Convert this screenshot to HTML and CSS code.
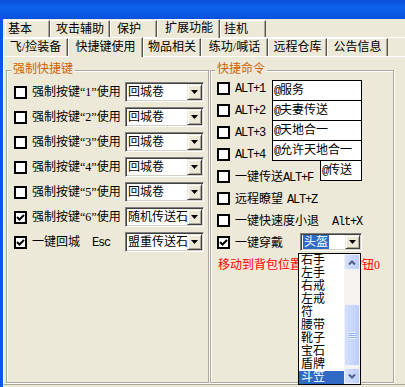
FILE: index.html
```html
<!DOCTYPE html>
<html lang="zh-CN">
<head>
<meta charset="utf-8">
<title>扩展功能 - 快捷键使用</title>
<link rel="stylesheet" href="styles.css">
</head>
<body>
<div class="titlebar"></div>
<div class="frame">
  <div class="tabs outer">
    <div class="tab">基本</div>
    <div class="tab">攻击辅助</div>
    <div class="tab">保护</div>
    <div class="tab active">扩展功能</div>
    <div class="tab">挂机</div>
  </div>
  <div class="tabs inner">
    <div class="tab">飞/捡装备</div>
    <div class="tab active">快捷键使用</div>
    <div class="tab">物品相关</div>
    <div class="tab">练功/喊话</div>
    <div class="tab">远程仓库</div>
    <div class="tab">公告信息</div>
  </div>
  <div class="panel">
    <fieldset class="group gleft">
      <legend>强制快捷键</legend>
      <div class="lrows">
        <div class="lrow"><span class="cb"></span><span class="lbl">强制按键“1”使用</span><div class="sel"><span class="val">回城卷</span><span class="dd"><svg width="7" height="4" viewBox="0 0 7 4"><path d="M0 0H7L3.5 4Z"/></svg></span></div></div>
        <div class="lrow"><span class="cb"></span><span class="lbl">强制按键“2”使用</span><div class="sel"><span class="val">回城卷</span><span class="dd"><svg width="7" height="4" viewBox="0 0 7 4"><path d="M0 0H7L3.5 4Z"/></svg></span></div></div>
        <div class="lrow"><span class="cb"></span><span class="lbl">强制按键“3”使用</span><div class="sel"><span class="val">回城卷</span><span class="dd"><svg width="7" height="4" viewBox="0 0 7 4"><path d="M0 0H7L3.5 4Z"/></svg></span></div></div>
        <div class="lrow"><span class="cb"></span><span class="lbl">强制按键“4”使用</span><div class="sel"><span class="val">回城卷</span><span class="dd"><svg width="7" height="4" viewBox="0 0 7 4"><path d="M0 0H7L3.5 4Z"/></svg></span></div></div>
        <div class="lrow"><span class="cb"></span><span class="lbl">强制按键“5”使用</span><div class="sel"><span class="val">回城卷</span><span class="dd"><svg width="7" height="4" viewBox="0 0 7 4"><path d="M0 0H7L3.5 4Z"/></svg></span></div></div>
        <div class="lrow"><span class="cb"><svg width="9" height="9" viewBox="0 0 9 9"><path d="M1 4L3.5 6.5L8 2" fill="none" stroke="#000" stroke-width="2"/></svg></span><span class="lbl">强制按键“6”使用</span><div class="sel"><span class="val">随机传送石</span><span class="dd"><svg width="7" height="4" viewBox="0 0 7 4"><path d="M0 0H7L3.5 4Z"/></svg></span></div></div>
        <div class="lrow"><span class="cb"><svg width="9" height="9" viewBox="0 0 9 9"><path d="M1 4L3.5 6.5L8 2" fill="none" stroke="#000" stroke-width="2"/></svg></span><span class="lbl">一键回城<span class="en esc">Esc</span></span><div class="sel"><span class="val">盟重传送石</span><span class="dd"><svg width="7" height="4" viewBox="0 0 7 4"><path d="M0 0H7L3.5 4Z"/></svg></span></div></div>
      </div>
    </fieldset>
    <fieldset class="group gright">
      <legend>快捷命令</legend>
      <div class="rpanel">
        <div class="rrows">
          <div class="rrow"><span class="cb"></span><span class="rl"><span class="en">ALT+1</span></span></div>
          <div class="rrow"><span class="cb"></span><span class="rl"><span class="en">ALT+2</span></span></div>
          <div class="rrow"><span class="cb"></span><span class="rl"><span class="en">ALT+3</span></span></div>
          <div class="rrow"><span class="cb"></span><span class="rl"><span class="en">ALT+4</span></span></div>
          <div class="rrow"><span class="cb"></span><span class="rl">一键传送<span class="en">ALT+F</span></span></div>
          <div class="rrow"><span class="cb"></span><span class="rl">远程瞭望<span class="en gap4">ALT+Z</span></span></div>
          <div class="rrow"><span class="cb"></span><span class="rl">一键快速度小退<span class="en gap13">Alt+X</span></span></div>
          <div class="rrow"><span class="cb"><svg width="9" height="9" viewBox="0 0 9 9"><path d="M1 4L3.5 6.5L8 2" fill="none" stroke="#000" stroke-width="2"/></svg></span><span class="rl wear-lbl">一键穿戴</span>
            <div class="sel wear"><span class="val"><span class="hl">头盔</span></span><span class="dd"><svg width="7" height="4" viewBox="0 0 7 4"><path d="M0 0H7L3.5 4Z"/></svg></span>
              <div class="list">
                <div class="items">
                  <div>右手</div>
                  <div>左手</div>
                  <div>右戒</div>
                  <div>左戒</div>
                  <div>符</div>
                  <div>腰带</div>
                  <div>靴子</div>
                  <div>宝石</div>
                  <div>盾牌</div>
                  <div class="cur">斗笠</div>
                </div>
                <div class="sb">
                  <div class="sbtn"><svg width="8" height="5" viewBox="0 0 8 5"><path d="M1 4.5L4 1.5L7 4.5" fill="none" stroke="#4d6185" stroke-width="2"/></svg></div>
                  <div class="track"></div>
                  <div class="thumb"><span class="grip"></span></div>
                  <div class="track2"></div>
                  <div class="sbtn"><svg width="8" height="5" viewBox="0 0 8 5"><path d="M1 0.5L4 3.5L7 0.5" fill="none" stroke="#4d6185" stroke-width="2"/></svg></div>
                </div>
              </div>
            </div>
          </div>
          <div class="rrow note">移动到背包位置后请点击按钮0</div>
        </div>
        <div class="boxes">
          <div class="tb"><span class="en">@</span>服务</div>
          <div class="tb"><span class="en">@</span>夫妻传送</div>
          <div class="tb"><span class="en">@</span>天地合一</div>
          <div class="tb"><span class="en">@</span>允许天地合一</div>
          <div class="tb short"><span class="en">@</span>传送</div>
        </div>
      </div>
    </fieldset>
  </div>
</div>
</body>
</html>
```

FILE: styles.css
```css
* { box-sizing: border-box; }
html, body { margin: 0; padding: 0; }
body {
  width: 405px;
  height: 387px;
  overflow: hidden;
  background: #ece9d8;
  font: 12px "Liberation Serif", "Noto Sans CJK SC", serif;
  color: #000;
}

.titlebar {
  height: 19px;
  background: linear-gradient(#0b4fd8, #0f62ec 40%, #0b5ae6 70%, #0a52dd);
}

.frame {
  height: 368px;
  border-left: 3px solid #0b56e4;
  display: flex;
  flex-direction: column;
}

/* tabs */
.tabs { display: flex; align-items: flex-start; flex: none; }
.tab {
  white-space: nowrap;
  border-top: 1px solid #fff;
  border-left: 1px solid #fff;
  border-right: 1px solid #55534c;
  box-shadow: inset -1px 0 #aca899;
  background: #ece9d8;
}
.outer { height: 19px; padding-left: 2px; border-bottom: 1px solid #fff; }
.outer .tab { margin-top: 1px; height: 17px; line-height: 16px; padding-left: 5px; }
.outer .tab:nth-child(1) { width: 45px; padding-left: 2px; }
.outer .tab:nth-child(2) { width: 60px; }
.outer .tab:nth-child(3) { width: 47px; padding-left: 6px; }
.outer .tab:nth-child(4) { width: 63px; padding-left: 7px; }
.outer .tab:nth-child(5) { width: 46px; padding-left: 3px; }
.outer .tab.active { margin-top: 0; height: 19px; line-height: 17px; position: relative; z-index: 1; }

.inner { height: 18px; }
.inner .tab { height: 18px; line-height: 17px; text-align: center; }
.inner .tab:nth-child(1) { width: 65px; }
.inner .tab:nth-child(2) { width: 75px; }
.inner .tab:nth-child(3) { width: 58px; }
.inner .tab:nth-child(4) { width: 67px; }
.inner .tab:nth-child(5) { width: 59px; }
.inner .tab:nth-child(6) { width: 61px; }
.inner .tab.active { margin-top: -1px; height: 20px; line-height: 18px; position: relative; z-index: 1; }

/* panel + groups */
.panel {
  flex: none;
  height: 329px;
  border-top: 1px solid #fff;
  border-left: 1px solid #fff;
  border-bottom: 1px solid #aca899;
  display: flex;
  gap: 1px;
  padding: 7px 0 0 2px;
}
.group {
  margin: 0;
  padding: 0;
  min-width: 0;
  flex: none;
  height: 319px;
  border: 1px solid #aca899;
  box-shadow: inset 1px 1px #fff, 1px 1px #fff;
}
.gleft { width: 203px; }
.gright { width: 184px; }
.group legend {
  margin-left: 4px;
  padding: 0 2px;
  line-height: 12px;
  color: #cf6106;
  background: #ece9d8;
  position: relative;
  top: -1px;
}

.cb {
  flex: none;
  width: 13px;
  height: 13px;
  border: 2px solid #000;
  background: #fff;
  display: flex;
  align-items: center;
  justify-content: center;
}

.en {
  font-family: "Liberation Mono", monospace;
  font-size: 12px;
  letter-spacing: -1.2px;
}
.esc { margin-left: 12px; }
.gap4 { margin-left: 4px; }
.gap13 { margin-left: 13px; }

/* left group */
.lrows { display: flex; flex-direction: column; gap: 5px; padding: 6px 0 0 7px; }
.lrow { display: flex; align-items: center; height: 20px; }
.lbl { flex: none; width: 93px; margin-left: 5px; white-space: nowrap; line-height: 14px; }

/* combo box */
.sel {
  flex: none;
  display: flex;
  align-items: center;
  width: 79px;
  height: 20px;
  padding: 1px;
  background: #fff;
  border: 1px solid;
  border-color: #808080 #fff #fff #808080;
  box-shadow: inset 1px 1px #404040, inset -1px -1px #d4d0c8;
}
.val { flex: 1; min-width: 0; padding-left: 1px; white-space: nowrap; line-height: 16px; }
.dd {
  flex: none;
  width: 15px;
  height: 16px;
  background: #ece9d8;
  border: 1px solid;
  border-color: #ece9d8 #404040 #404040 #ece9d8;
  box-shadow: inset 1px 1px #fff, inset -1px -1px #aca899;
  display: flex;
  align-items: center;
  justify-content: center;
  position: relative;
}

/* right group */
.rpanel { display: grid; padding: 1px 0 0 6px; }
.rpanel > * { grid-area: 1 / 1; }
.rrows { display: flex; flex-direction: column; }
.rrow { display: flex; align-items: center; height: 22px; }
.rl { margin-left: 5px; white-space: nowrap; }
.wear-lbl { width: 65px; flex: none; }
.note { color: #f00; padding-left: 1px; }

.boxes {
  align-self: start;
  justify-self: start;
  margin: 3px 0 0 55px;
  width: 90px;
  display: flex;
  flex-direction: column;
}
.tb {
  height: 21px;
  border: 1px solid #000;
  background: #fff;
  line-height: 19px;
  padding-left: 1px;
  white-space: nowrap;
}
.tb + .tb { margin-top: -1px; }
.tb.short { width: 42px; margin-left: 48px; }

.sel.wear { width: 62px; height: 18px; position: relative; }
.sel.wear .dd { height: 14px; }
.hl { background: #316ac5; color: #fff; padding: 0 1px; }

/* dropdown list (overlay) */
.list {
  position: absolute;
  z-index: 5;
  top: calc(100% + 3px);
  left: -3px;
  width: 63px;
  height: 132px;
  border: 1px solid #000;
  background: #fff;
  display: flex;
}
.items { flex: 1; }
.items div { height: 13px; line-height: 13px; padding-left: 2px; white-space: nowrap; }
.items .cur { background: #316ac5; color: #fff; }
.sb { flex: none; width: 16px; display: flex; flex-direction: column; background: #f5f4f0; }
.sbtn, .thumb {
  background: linear-gradient(90deg, #d5e0fc, #bccef9);
  border: 1px solid #eef2fd;
  border-radius: 2px;
  display: flex;
  align-items: center;
  justify-content: center;
}
.sbtn { height: 16px; }
.track { height: 34px; }
.thumb { height: 62px; }
.track2 { height: 2px; }
.grip {
  width: 7px;
  height: 7px;
  background: repeating-linear-gradient(#eef3fe 0 1px, #8eaef0 1px 2px);
}
```
